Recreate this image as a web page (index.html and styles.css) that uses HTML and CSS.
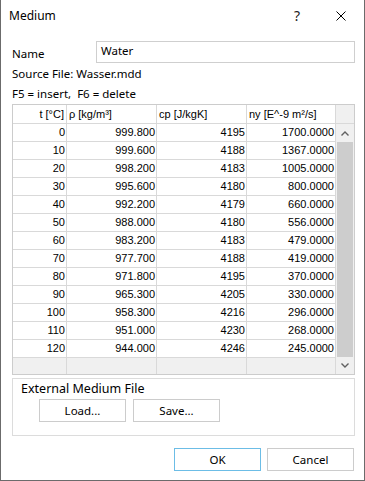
FILE: index.html
```html
<!DOCTYPE html>
<html lang="en">
<head>
  <meta charset="UTF-8">
  <title>Medium</title>
  <link rel="stylesheet" href="styles.css">
</head>
<body>
  <div class="window">
    <div class="titlebar">
      <span class="title">Medium</span>
      <span class="help">?</span>
      <svg class="close" width="10" height="10" viewBox="0 0 10 10">
        <path d="M0.5 0.5 L9.5 9.5 M9.5 0.5 L0.5 9.5" stroke="#000" stroke-width="1" fill="none"/>
      </svg>
    </div>

    <div class="content">
      <div class="name-row">
        <label class="label">Name</label>
        <div class="textbox">Water</div>
      </div>
      <div class="line">Source File: Wasser.mdd</div>
      <div class="line">F5 = insert,&nbsp; F6 = delete</div>

      <div class="table">
        <div class="grid">
          <div class="row head">
            <div class="cell num">t [°C]</div>
            <div class="cell">ρ [kg/m³]</div>
            <div class="cell">cp [J/kgK]</div>
            <div class="cell">ny [E^-9 m²/s]</div>
          </div>
          <div id="rows"></div>
          <div class="row new">
            <div class="cell"></div>
            <div class="cell"></div>
            <div class="cell"></div>
            <div class="cell"></div>
          </div>
        </div>
        <div class="scrollbar">
          <div class="scroll-head"></div>
          <div class="arrow">
            <svg width="8" height="5" viewBox="0 0 8 5"><path d="M0.5 4.5 L4 1 L7.5 4.5" stroke="#606060" stroke-width="1.4" fill="none"/></svg>
          </div>
          <div class="thumb"></div>
          <div class="arrow down">
            <svg width="8" height="5" viewBox="0 0 8 5"><path d="M0.5 0.5 L4 4 L7.5 0.5" stroke="#606060" stroke-width="1.4" fill="none"/></svg>
          </div>
        </div>
      </div>

      <div class="groupbox">
        <div class="group-title">External Medium File</div>
        <div class="group-buttons">
          <button class="btn">Load...</button>
          <button class="btn">Save...</button>
        </div>
      </div>

      <div class="footer">
        <button class="btn default">OK</button>
        <button class="btn">Cancel</button>
      </div>
    </div>
  </div>

  <script>
    const data = [
      [0, '999.800', 4195, '1700.0000'],
      [10, '999.600', 4188, '1367.0000'],
      [20, '998.200', 4183, '1005.0000'],
      [30, '995.600', 4180, '800.0000'],
      [40, '992.200', 4179, '660.0000'],
      [50, '988.000', 4180, '556.0000'],
      [60, '983.200', 4183, '479.0000'],
      [70, '977.700', 4188, '419.0000'],
      [80, '971.800', 4195, '370.0000'],
      [90, '965.300', 4205, '330.0000'],
      [100, '958.300', 4216, '296.0000'],
      [110, '951.000', 4230, '268.0000'],
      [120, '944.000', 4246, '245.0000']
    ];
    const rows = document.getElementById('rows');
    data.forEach(r => {
      const row = document.createElement('div');
      row.className = 'row';
      r.forEach(v => {
        const cell = document.createElement('div');
        cell.className = 'cell num';
        cell.textContent = v;
        row.appendChild(cell);
      });
      rows.appendChild(row);
    });
  </script>
</body>
</html>
```

FILE: styles.css
```css
* {
  box-sizing: border-box;
}
body {
  margin: 0;
  background: #fff;
  font-family: 'Noto Sans', 'Open Sans', sans-serif;
  font-size: 11.5px;
  color: #000;
}
.window {
  width: 365px;
  height: 481px;
  background: #fff;
  border-left: 1px solid #6b6b6b;
  border-right: 1px solid #6b6b6b;
  border-bottom: 1px solid #6b6b6b;
}

.titlebar {
  height: 31px;
  display: flex;
  align-items: center;
  padding-left: 8px;
}
.title {
  flex: 1;
  font-size: 12px;
}
.help {
  font-size: 14px;
  margin-right: 36px;
  color: #222;
}
.close {
  margin-right: 18px;
}

.content {
  padding: 10px 9px 0 11px;
}
.name-row {
  display: flex;
  align-items: center;
  height: 22px;
}
.label {
  width: 84px;
  padding-top: 2px;
}
.textbox {
  flex: 1;
  height: 22px;
  border: 1px solid #cfcfcf;
  padding: 1px 4px 0;
  line-height: 16px;
}
.line {
  height: 20px;
  line-height: 20px;
}
.name-row + .line {
  margin-top: 1px;
}

/* table */
.table {
  display: flex;
  border: 1px solid #cccccc;
  font-family: 'Liberation Sans', Arial, sans-serif;
  font-size: 11px;
}
.grid {
  width: 323px;
}
.row {
  display: grid;
  grid-template-columns: 54px 90px 90px 89px;
  height: 18px;
}
.row.head {
  height: 19px;
}
.row.new {
  height: 16px;
  background: #f0f0f0;
}
.row.new .cell {
  border-bottom: none;
}
.cell {
  border-right: 1px solid #d9d9d9;
  border-bottom: 1px solid #d9d9d9;
  padding: 0 2px;
  line-height: 17px;
  white-space: nowrap;
  overflow: hidden;
}
.row.head .cell {
  line-height: 18px;
}
.cell.num {
  text-align: right;
  padding-right: 1px;
}
.row.head .cell.num {
  padding-right: 2px;
}

.scrollbar {
  width: 18px;
  display: flex;
  flex-direction: column;
  background: #f0f0f0;
}
.scroll-head {
  height: 19px;
  border-bottom: 1px solid #d9d9d9;
}
.arrow {
  height: 18px;
  display: flex;
  align-items: center;
  justify-content: center;
}
.arrow.down {
  height: 17px;
}
.thumb {
  flex: 1;
  margin: 0 1px 0 1px;
  background: #cdcdcd;
}

/* group box */
.groupbox {
  margin-top: 3px;
  border: 1px solid #dcdcdc;
  height: 58px;
  padding: 0 0 0 8px;
}
.group-title {
  height: 19px;
  line-height: 19px;
  font-size: 12.5px;
}
.group-buttons {
  display: flex;
  gap: 7px;
  margin-top: 1px;
  padding-left: 18px;
}

.btn {
  width: 87px;
  height: 23px;
  background: #fff;
  border: 1px solid #cccccc;
  font-family: 'Noto Sans', 'Open Sans', sans-serif;
  font-size: 11.5px;
  color: #000;
  padding: 0;
}
.btn.default {
  border-color: #6cbde6;
}

.footer {
  display: flex;
  justify-content: flex-end;
  gap: 6px;
  margin-top: 12px;
  padding-right: 1px;
}
```
